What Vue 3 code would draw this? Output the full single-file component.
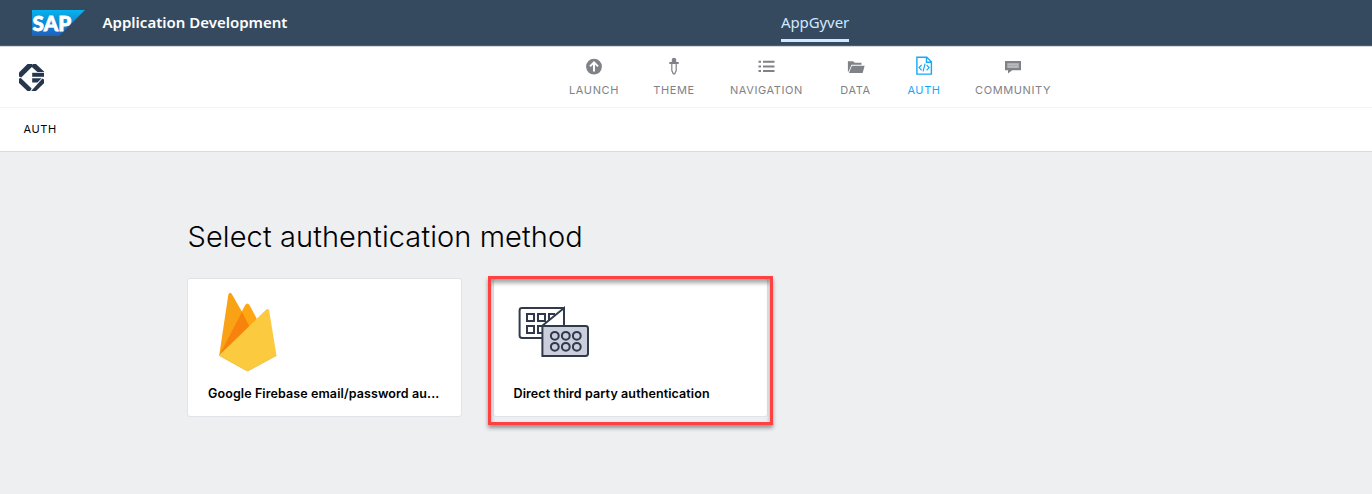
<script setup>
const navItems = [
  { id: 'launch', label: 'LAUNCH', width: 50 },
  { id: 'theme', label: 'THEME', width: 40 },
  { id: 'navigation', label: 'NAVIGATION', width: 75 },
  { id: 'data', label: 'DATA', width: 33 },
  { id: 'auth', label: 'AUTH', width: 34, active: true },
  { id: 'community', label: 'COMMUNITY', width: 74 },
]
</script>

<template>
  <div class="page">
    <header class="shell">
      <svg class="sap" width="54" height="27" viewBox="0 0 54 27">
        <defs>
          <linearGradient id="sapBlue" x1="0" y1="0" x2="0" y2="1">
            <stop offset="0" stop-color="#06b3ee" />
            <stop offset="1" stop-color="#1e5fbd" />
          </linearGradient>
        </defs>
        <path d="M0 0H53L27 26H0Z" fill="url(#sapBlue)" />
        <text x="0.6" y="20.6" textLength="38.5" lengthAdjust="spacingAndGlyphs" class="sap-text">SAP</text>
      </svg>
      <h1 class="title">Application Development</h1>
      <a class="product">AppGyver</a>
    </header>

    <nav class="toolbar">
      <svg class="logo" width="26" height="28" viewBox="0 0 26 28">
        <g fill="#26374d">
          <path d="M8.5 0H13L14.4 1.4 2.2 13.4 0 12.6V8.6Z" />
          <path d="M14 0H17L25 7.6V8H18.4L12.8 2.9Z" />
          <path d="M13.2 8.8H25V12.8H13.2Z" />
          <path d="M13.2 14.2H22.6L18.4 18.6H13.2Z" />
          <path d="M0 14.4 1.8 14 12.6 24.4 11.2 27H8.4L0 19Z" />
          <path d="M23.4 14.4 25 15.6V19.2L17 27H12.2Z" />
        </g>
      </svg>
      <div class="nav">
        <a
          v-for="item in navItems"
          :key="item.id"
          class="nav-item"
          :class="[item.id, { active: item.active }]"
          :style="{ width: item.width + 'px' }"
        >
          <svg width="18" height="20" viewBox="0 0 18 20">
            <g v-if="item.id === 'launch'">
              <circle cx="9" cy="10.6" r="7.9" fill="#7f8287" />
              <path d="M9 15.6V7M5 10.4 9 6.4 13 10.4" fill="none" stroke="#fff" stroke-width="2" />
            </g>
            <g v-else-if="item.id === 'theme'" fill="#7f8287">
              <path d="M6.8 3.4Q7 1.8 9 1.8T11.2 3.4V6H13.7V8H4.3V6H6.8Z" />
              <path d="M6.8 8V14.5L8.3 17.8H9.7L11.2 14.5V8" fill="none" stroke="#7f8287" stroke-width="1.2" />
            </g>
            <g v-else-if="item.id === 'navigation'" fill="#7f8287">
              <path d="M.5 4.8H3V6.8H.5ZM.5 9.4H3V11.4H.5ZM.5 14H3V16H.5ZM5 4.8H16.5V6.8H5ZM5 9.4H16.5V11.4H5ZM5 14H16.5V16H5Z" />
            </g>
            <g v-else-if="item.id === 'data'" fill="#7f8287">
              <path d="M.9 5.2H6.1L7.7 6.8H14.5V8.8H4.5L1.6 15.4H.9Z" />
              <path d="M4.9 9.7H17.6L15.7 17H1.9Z" />
            </g>
            <g v-else-if="item.id === 'auth'" fill="none" stroke="#16a8fa" stroke-width="1.4">
              <path d="M1.9 1.2H11.8L16.4 5.8V18.1H1.9ZM11.5 1.2V6.2H16.4" />
              <path d="M6.6 8.9 4.1 11.6 6.6 14.3M11.6 8.9 14.1 11.6 11.6 14.3M10.1 7.6 8.1 15.4" stroke-width="1.2" />
            </g>
            <g v-else>
              <path d="M1 5H17V14.3H8.2L4 17.4V14.3H1Z" fill="#7f8287" />
              <path d="M3.3 7.2H14.8V11.9H3.3Z" fill="#b9bbbe" />
              <path d="M3.3 9.5H14.8" stroke="#a4a7aa" stroke-width=".8" />
            </g>
          </svg>
          <span>{{ item.label }}</span>
        </a>
      </div>
    </nav>

    <div class="crumb"><span>AUTH</span></div>

    <main class="content">
      <h2>Select authentication method</h2>
      <div class="cards">
        <section class="card">
          <svg class="firebase" width="60" height="82" viewBox="0 0 60 82">
            <path d="M1.2 64.5 10.3 3.8Q11.5 .4 13.8 3L25 22.5 29 31Z" fill="#f9a216" />
            <path d="M1.2 64.5 27.2 14Q29.4 10.9 31.5 14L38.9 28 30 38Z" fill="#ffa712" />
            <path d="M1.2 64.5 24 20.8 31.4 35.5Z" fill="#f7820c" />
            <path d="M1.2 64.5 48 18.8Q50.2 16.8 51.1 19.3L58.5 64.5 31.4 79.2Q29.5 80.4 27.7 79.2Z" fill="#fbca3f" />
            <path d="M1.2 64.5 27.7 79.2Q29.5 80.4 31.4 79.2L58.5 64.5" fill="none" stroke="#edb93a" stroke-width=".7" />
          </svg>
          <p class="name google">Google Firebase email/password au...</p>
        </section>
        <section class="card marked">
          <svg class="panels" width="72" height="52" viewBox="0 0 72 52">
            <g fill="none" stroke="#303a4a" stroke-width="2">
              <path d="M46 20V2H4Q1.6 2 1.6 4.4V29.6Q1.6 32 4 32H24" />
              <path d="M9 8H16V15H9ZM20 8H27V15H20ZM9 20H16V27H9ZM24 20H20V27H24M37 8H31V14" />
              <path d="M24 20 46 2V20Z" fill="#fff" />
              <path d="M24.4 20H67.6Q70 20 70 22.4V47.6Q70 50 67.6 50H24.4Z" fill="#cbcedd" />
              <circle v-for="n in 6" :key="n" :cx="36.8 + ((n - 1) % 3) * 11" :cy="n > 3 ? 40.8 : 29.8" r="3.9" />
            </g>
          </svg>
          <p class="name direct">Direct third party authentication</p>
        </section>
      </div>
    </main>
  </div>
</template>

<style>
body {
  margin: 0;
  background: #eeeff1;
}
</style>

<style scoped>
.page {
  height: 494px;
  overflow: hidden;
  background: #eeeff1;
  color: #000;
  font-family: Inter, "Open Sans", sans-serif;
}
h1, h2, p { margin: 0; font-weight: 400; }
svg { display: block; flex: none; overflow: visible; }
.shell {
  box-sizing: border-box;
  height: 47px;
  display: flex;
  align-items: flex-start;
  padding-left: 32px;
  background: #354a5f;
  border-bottom: 1px solid #d5d8de;
  box-shadow: inset 0 -1px #4b5c70;
  font-family: "Noto Sans", sans-serif;
}
.sap { margin-top: 10px; }
.sap-text { font: 900 21px Lato, sans-serif; fill: #fff; stroke: #fff; stroke-width: .8px; }
.title {
  width: 678px;
  margin-left: 16.5px;
  color: #fff;
  font-size: 15px;
  font-weight: 600;
  line-height: 20px;
  padding-top: 12px;
  white-space: nowrap;
}
.product {
  box-sizing: border-box;
  width: 68px;
  height: 42px;
  margin-left: .5px;
  padding-top: 12px;
  border-bottom: 3px solid #d1e8ff;
  color: #d1e8ff;
  font-size: 15px;
  letter-spacing: -.1px;
  line-height: 20px;
  white-space: nowrap;
}
.toolbar {
  display: flex;
  height: 60px;
  background: #fff;
  border-bottom: 1px solid #f3f3f4;
}
.logo { margin: 17px 0 0 19px; }
.nav { display: flex; gap: 35px; margin-left: 524px; }
.nav-item {
  display: flex;
  flex-direction: column;
  align-items: center;
  padding-top: 9px;
  color: #7f8287;
  font-size: 11px;
  letter-spacing: .6px;
}
.nav-item span { margin-top: 7px; line-height: 14px; white-space: nowrap; }
.nav-item.active { color: #16a8fa; }
.crumb {
  box-sizing: border-box;
  height: 44px;
  display: flex;
  align-items: center;
  padding: 0 0 2px 23.5px;
  background: #fff;
  border-bottom: 1px solid #d9dadd;
  font-size: 11px;
  letter-spacing: .6px;
}
.content { padding: 65px 0 0 187px; }
h2 {
  margin-left: .5px;
  font-size: 29px;
  font-weight: 300;
  letter-spacing: .1px;
  line-height: 40px;
  white-space: nowrap;
}
.cards { display: flex; gap: 31px; margin-top: 21px; }
.card {
  position: relative;
  box-sizing: border-box;
  width: 275px;
  height: 139px;
  background: #fff;
  border: 1px solid #e0e3e8;
  border-radius: 3px;
}
.firebase { margin: 12px 0 0 29.5px; }
.panels { margin: 27px 0 0 23.5px; }
.name {
  font-size: 12.5px;
  font-weight: 600;
  letter-spacing: .1px;
  line-height: 18px;
  white-space: nowrap;
}
.google { margin: 12px 0 0 20px; }
.direct { margin: 27px 0 0 19.5px; }
.marked::after {
  content: "";
  position: absolute;
  inset: -3px -6px -9px;
  border: 3px solid #ff4141;
  box-shadow: 0 3px 4px rgba(0, 0, 0, .38), inset 0 4px 4px rgba(0, 0, 0, .35);
}
</style>
